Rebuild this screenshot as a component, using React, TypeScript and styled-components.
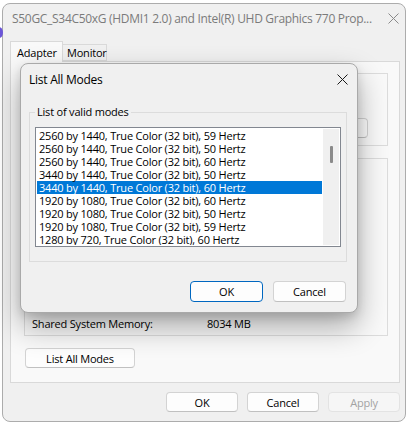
import React from "react";
import styled, { createGlobalStyle } from "styled-components";

const GlobalStyle = createGlobalStyle`
  html, body {
    margin: 0;
    padding: 0;
    background: #ffffff;
  }
  body {
    font-family: "Open Sans", "Noto Sans", sans-serif;
    font-size: 11px;
    letter-spacing: -0.2px;
    color: #000;
  }
`;

const Screen = styled.div`
  position: relative;
  box-sizing: border-box;
  width: 406px;
  height: 423px;
  padding: 3px 0 1px 2px;
  overflow: hidden;
`;

const BehindBlob = styled.div`
  position: absolute;
  left: -5px;
  top: 27px;
  width: 8px;
  height: 11px;
  border-radius: 50%;
  background: #6b55d8;
`;

const Window = styled.div`
  box-sizing: border-box;
  width: 100%;
  height: 100%;
  display: flex;
  flex-direction: column;
  background: #f0f0f0;
  border: 1px solid #acacac;
  border-radius: 8px;
`;

const TitleBar = styled.div`
  height: 29px;
  display: flex;
  align-items: center;
  justify-content: space-between;
  padding-left: 9px;
`;

const WindowTitle = styled.span`
  font-size: 12px;
  letter-spacing: -0.3px;
  color: #7b7b7b;
  white-space: nowrap;
`;

const CloseBox = styled.div<{ $width: number }>`
  width: ${(p) => p.$width}px;
  height: 100%;
  display: flex;
  align-items: center;
  justify-content: center;
`;

const TabStrip = styled.div`
  display: flex;
  align-items: flex-end;
  height: 20px;
  margin: 9px 0 -1px 7px;
  position: relative;
  z-index: 1;
`;

const Tab = styled.div<{ $active?: boolean; $width: number }>`
  box-sizing: border-box;
  width: ${(p) => p.$width}px;
  height: ${(p) => (p.$active ? 21 : 17)}px;
  padding-left: ${(p) => (p.$active ? 6 : 4)}px;
  display: flex;
  align-items: center;
  background: ${(p) => (p.$active ? "#f9f9f9" : "#f0f0f0")};
  border: 1px solid #d9d9d9;
  border-bottom: ${(p) => (p.$active ? "none" : "1px solid #d9d9d9")};
  border-left: ${(p) => (p.$active ? "1px solid #d9d9d9" : "none")};
  align-self: flex-end;
  margin-bottom: ${(p) => (p.$active ? 0 : 1)}px;
`;

const Panel = styled.div`
  box-sizing: border-box;
  height: 322px;
  margin: 0 5px 0 7px;
  padding: 11px 11px 0 13px;
  background: #f9f9f9;
  border: 1px solid #d9d9d9;
  display: flex;
  flex-direction: column;
`;

const GroupBox = styled.div<{ $height: number }>`
  box-sizing: border-box;
  height: ${(p) => p.$height}px;
  border: 1px solid #dcdcdc;
  display: flex;
  flex-direction: column;
`;

const AdapterGroup = styled(GroupBox)`
  align-items: flex-end;
  padding: 44px 19px 0 0;
`;

const InfoGroup = styled(GroupBox)`
  margin-top: 12px;
  justify-content: flex-end;
  padding: 0 0 5px 7px;
`;

const InfoRow = styled.div`
  display: flex;
  height: 14px;
  align-items: center;
`;

const InfoLabel = styled.span`
  width: 175px;
`;

const Button = styled.button<{ $primary?: boolean; $width?: number; $height?: number }>`
  box-sizing: border-box;
  width: ${(p) => p.$width ?? 72}px;
  height: ${(p) => p.$height ?? 21}px;
  padding: 0;
  font: inherit;
  letter-spacing: -0.2px;
  color: #000;
  background: #fdfdfd;
  border: 1px solid ${(p) => (p.$primary ? "#0067c0" : "#d3d3d3")};
  border-bottom-color: ${(p) => (p.$primary ? "#0067c0" : "#c0c0c0")};
  border-radius: 4px;
  &:disabled {
    color: #a3a3a3;
    background: #f6f6f6;
    border-color: #e3e3e3;
  }
`;

const ListAllButton = styled(Button)`
  margin: 12px 0 0 1px;
`;

const Footer = styled.div<{ $top: number; $right: number; $gap: number }>`
  display: flex;
  justify-content: flex-end;
  gap: ${(p) => p.$gap}px;
  margin-top: ${(p) => p.$top}px;
  padding-right: ${(p) => p.$right}px;
`;

/* the List All Modes dialog, floating over the properties window */
const Dialog = styled.div`
  position: absolute;
  left: 20px;
  top: 63px;
  box-sizing: border-box;
  width: 338px;
  height: 250px;
  background: #f0f0f0;
  border: 1px solid #a9a9a9;
  border-radius: 8px;
  box-shadow: 0 14px 30px rgba(0, 0, 0, 0.32), 0 4px 10px rgba(0, 0, 0, 0.12);
  display: flex;
  flex-direction: column;
  z-index: 5;
`;

const DialogTitleBar = styled.div`
  height: 30px;
  display: flex;
  align-items: center;
  justify-content: space-between;
  padding-left: 8px;
`;

const DialogTitle = styled.span`
  font-size: 12px;
  letter-spacing: -0.25px;
  color: #000;
`;

const ModesGroup = styled.fieldset`
  margin: 11px 10px 0 8px;
  padding: 8px 5px 14px 5px;
  border: 1px solid #dcdcdc;
  min-width: 0;
`;

const ModesLegend = styled.legend`
  padding: 0 2px;
  line-height: 14px;
`;

const ListBox = styled.div`
  box-sizing: border-box;
  width: 306px;
  height: 120px;
  padding: 1px;
  background: #fff;
  border: 1px solid #828790;
  display: flex;
  gap: 1px;
`;

const Items = styled.div`
  width: 285px;
  overflow: hidden;
`;

const Item = styled.div<{ $selected?: boolean }>`
  height: 13px;
  line-height: 13px;
  padding-left: 2px;
  white-space: nowrap;
  background: ${(p) => (p.$selected ? "#0078d7" : "transparent")};
  color: ${(p) => (p.$selected ? "#fff" : "#000")};
`;

const ScrollTrack = styled.div`
  width: 16px;
  background: #f0f0f0;
  display: flex;
  justify-content: center;
  padding-top: 17px;
`;

const ScrollThumb = styled.div`
  width: 3px;
  height: 17px;
  border-radius: 1px;
  background: #8a8a8a;
`;

const modes = [
  "2560 by 1440, True Color (32 bit), 59 Hertz",
  "2560 by 1440, True Color (32 bit), 50 Hertz",
  "2560 by 1440, True Color (32 bit), 60 Hertz",
  "3440 by 1440, True Color (32 bit), 50 Hertz",
  "3440 by 1440, True Color (32 bit), 60 Hertz",
  "1920 by 1080, True Color (32 bit), 60 Hertz",
  "1920 by 1080, True Color (32 bit), 50 Hertz",
  "1920 by 1080, True Color (32 bit), 59 Hertz",
  "1280 by 720, True Color (32 bit), 60 Hertz",
];

const CloseIcon = ({ color }: { color: string }) => (
  <svg width="11" height="11" viewBox="0 0 11 11">
    <path d="M0.5 0.5 L10.5 10.5 M10.5 0.5 L0.5 10.5" stroke={color} strokeWidth="1" fill="none" />
  </svg>
);

const App = () => {
  return (
    <Screen>
      <GlobalStyle />
      <BehindBlob />
      <Window>
        <TitleBar>
          <WindowTitle>S50GC_S34C50xG (HDMI1 2.0) and Intel(R) UHD Graphics 770 Prop...</WindowTitle>
          <CloseBox $width={24}>
            <CloseIcon color="#8a8a8a" />
          </CloseBox>
        </TitleBar>

        <TabStrip>
          <Tab $active $width={53}>Adapter</Tab>
          <Tab $width={44}>Monitor</Tab>
        </TabStrip>

        <Panel>
          <AdapterGroup $height={73}>
            <Button $width={75} $height={20}>Properties</Button>
          </AdapterGroup>
          <InfoGroup $height={178}>
            <InfoRow>
              <InfoLabel>Shared System Memory:</InfoLabel>
              <span>8034 MB</span>
            </InfoRow>
          </InfoGroup>
          <ListAllButton $width={110} $height={20}>List All Modes</ListAllButton>
        </Panel>

        <Footer $top={9} $right={5} $gap={9}>
          <Button $height={20}>OK</Button>
          <Button $height={20}>Cancel</Button>
          <Button $height={20} disabled>Apply</Button>
        </Footer>
      </Window>

      <Dialog>
        <DialogTitleBar>
          <DialogTitle>List All Modes</DialogTitle>
          <CloseBox $width={30}>
            <CloseIcon color="#1a1a1a" />
          </CloseBox>
        </DialogTitleBar>
        <ModesGroup>
          <ModesLegend>List of valid modes</ModesLegend>
          <ListBox>
            <Items>
              {modes.map((m, i) => (
                <Item key={i} $selected={i === 4}>{m}</Item>
              ))}
            </Items>
            <ScrollTrack>
              <ScrollThumb />
            </ScrollTrack>
          </ListBox>
        </ModesGroup>
        <Footer $top={19} $right={11} $gap={10}>
          <Button $primary $width={73}>OK</Button>
          <Button $width={73}>Cancel</Button>
        </Footer>
      </Dialog>
    </Screen>
  );
};

export default App;
